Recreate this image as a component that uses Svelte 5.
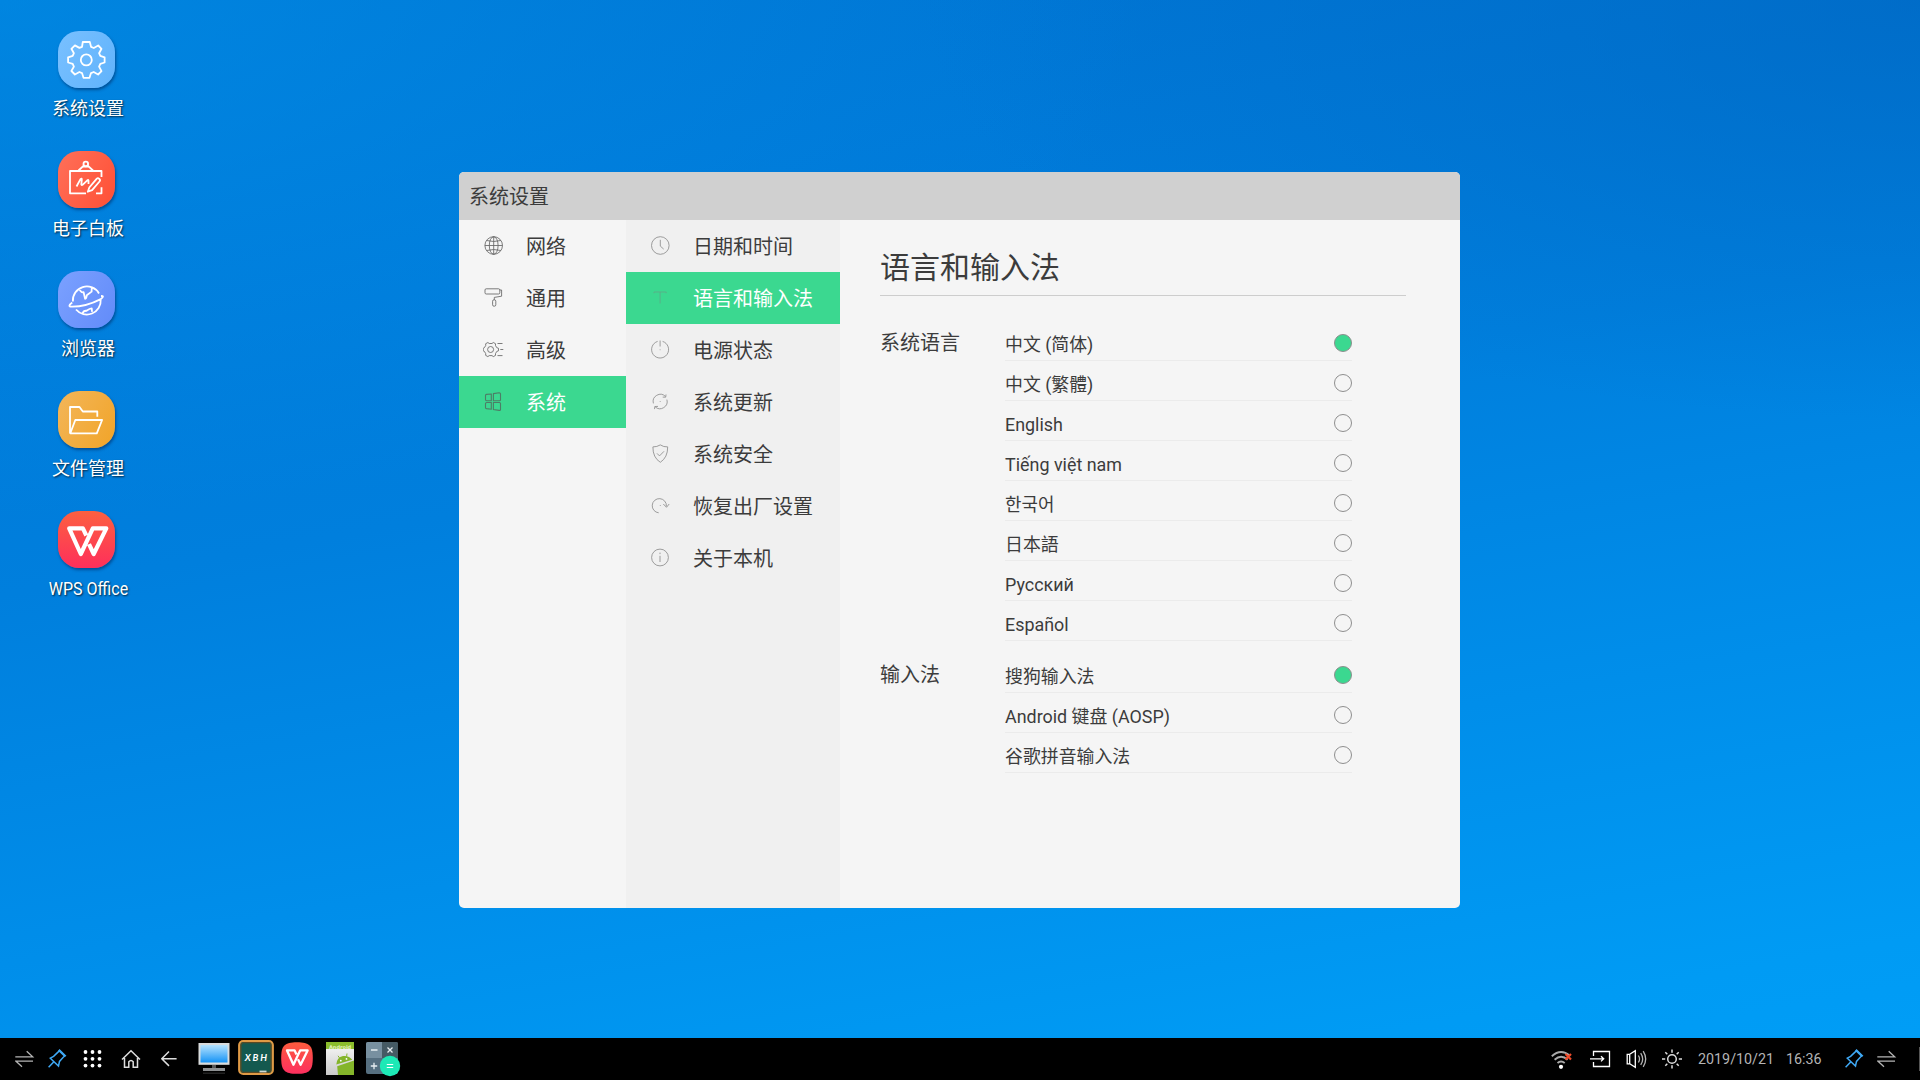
<script>
  const shortcuts = [
    { id: 'settings', label: '系统设置' },
    { id: 'board', label: '电子白板' },
    { id: 'browser', label: '浏览器' },
    { id: 'files', label: '文件管理' },
    { id: 'wps', label: 'WPS Office' },
  ];
  const sections = [
    { id: 'globe', label: '网络' },
    { id: 'roller', label: '通用' },
    { id: 'gear', label: '高级' },
    { id: 'windows', label: '系统', active: true },
  ];
  const pages = [
    { id: 'clock', label: '日期和时间' },
    { id: 'type', label: '语言和输入法', active: true },
    { id: 'power', label: '电源状态' },
    { id: 'update', label: '系统更新' },
    { id: 'shield', label: '系统安全' },
    { id: 'restore', label: '恢复出厂设置' },
    { id: 'info', label: '关于本机' },
  ];
  const groups = [
    {
      label: '系统语言',
      options: ['中文 (简体)', '中文 (繁體)', 'English', 'Tiếng việt nam', '한국어', '日本語', 'Русский', 'Español'],
    },
    { label: '输入法', options: ['搜狗输入法', 'Android 键盘 (AOSP)', '谷歌拼音输入法'] },
  ];
  let chosen = $state([0, 0]);
</script>

{#snippet navIcon(id)}
  <svg class="nav-icon" viewBox="0 0 22 22" width="22" height="22">
    {#if id === 'globe'}
      <circle cx="10.7" cy="10.5" r="8.8" />
      <ellipse cx="10.7" cy="10.5" rx="4.4" ry="8.8" />
      <path d="M10.7 1.7v17.6M1.9 10.5h17.6M3.6 5.5q7.1 2 14.2 0M3.6 15.5q7.1-2 14.2 0" />
    {:else if id === 'roller'}
      <rect x="2" y="1.8" width="14.8" height="5.2" rx="1.2" />
      <path d="M16.8 3h1.8v6.2l-7.3 1.2v2.4" />
      <rect x="9.6" y="12.8" width="3.2" height="6.4" rx="1.4" />
    {:else if id === 'gear'}
      <path d="M4.900 3.500l1.300 1h2.800l1.300-1 2.200 1.200v1.800l1.300 2.200 1.700.6v2.500l-1.700.6-1.300 2.200v1.800l-2.200 1.200-1.300-1H6.200l-1.300 1-2.200-1.200v-1.800L1.400 12.400l-1.200-.6V9.300l1.200-.6 1.300-2.200V4.700z" />
      <circle cx="7.600" cy="10.500" r="3" />
      <path d="M14.500 4.500h5M17.300 10.500h3M14.500 16.600h5" />
    {:else if id === 'windows'}
      <path d="M2.500 4.600q0-1 1-1.200L8.300 3v6.700H3.700q-1.200 0-1.200-1.100zM10.400 2.600l5.800-.9q1.300 0 1.300 1v6q0 1-1 1h-6.100zM2.500 12.500q0-1 1.200-1h4.600v6.700l-4.800-.6q-1-.2-1-1.200zM10.400 11.500h6.100q1 0 1 1v6q0 1-1.300.9l-5.800-.9z" />
    {:else if id === 'clock'}
      <circle cx="11.3" cy="10.5" r="8.8" />
      <path d="M11.3 4.8v6.3l3.400 3" />
    {:else if id === 'type'}
      <path d="M5 6.200V5h12.200v1.200M11.100 5v11.500" />
    {:else if id === 'power'}
      <path d="M8.600 2.400a8.500 8.500 0 1 0 5 0M11.100 1.500v6M11.100 10.400v.8" />
    {:else if id === 'update'}
      <path d="M4.400 12.400A7.200 7.200 0 0 1 16.400 5.400M17.900 8.600A7.200 7.200 0 0 1 6.200 15.900M13.700 6.100l3 .1.300-2.700M9 15.400l-3.200.1-.3 2.600M11.200 10.200v.8" />
    {:else if id === 'shield'}
      <path d="M11.300 1.900q3.300 2.200 7.400 2 0 10.700-7.400 15.400Q3.800 14.600 3.900 3.900 8 4 11.300 1.900zM8 10.400l2.500 2.500 4.500-4.600" />
    {:else if id === 'restore'}
      <path d="M9.700 17.800A7.100 7.100 0 1 1 17.400 11.300M14.300 9l3.200 3.300L20.200 9M11.300 10.200v.8" />
    {:else}
      <circle cx="11" cy="10.5" r="8.4" />
      <path d="M11 5.600v1.500M11 8.800v6.200" />
    {/if}
  </svg>
{/snippet}

{#snippet pin()}
  <svg class="tray-pin" viewBox="0 0 20 42" width="20" height="42">
    <path class="blue" d="M1.600 29.300l5.300-5.600M3.300 20.200l8.200 7.800 1-4.600 5-5.500-5.200-5-5.700 5.500z" />
    <path class="blue" d="M11.600 13.300l1-1.200 5.700 5.500-1.200 1" />
  </svg>
{/snippet}

{#snippet swap()}
  <svg class="tray-swap" viewBox="0 0 20 42" width="20" height="42">
    <path class="dim" d="M.3 18.900h17.400l-6-5.700M18 23.100H.8l6.200 5.600" />
  </svg>
{/snippet}

{#snippet wpsMark()}
  <path class="wps-mark" d="M28.300 24.500l-3.400-7.200H11.200L22.800 43l12-25.700h13.500L35.700 43l-4.700-9.800" />
{/snippet}

<main class="screen">
  <div class="workspace">
    <nav class="desktop">
      {#each shortcuts as item (item.id)}
        <button class="shortcut">
          <span class="tile {item.id}">
            <svg viewBox="0 0 57 57" width="57" height="57">
              {#if item.id === 'settings'}
                <path d="M24.800 11h7l1.300 4.900 2.700 1.100 4.400-2.500 3.300 3.300-2.400 4.400 1.200 2.700 4.300 1.400v5.200l-4.300 1.400-1.200 2.700 2.400 4.500-3.400 3.400-4.400-2.500-2.700 1.100-1.500 4.700h-6l-1.500-4.700-2.600-1.100-4.500 2.500-3.500-3.500 2.500-4.400-1.200-2.700-4.600-1.400v-5.200l4.600-1.400 1.200-2.700-2.500-4.400 3.500-3.400 4.500 2.500 2.600-1.100z" />
                <circle cx="28.3" cy="28.9" r="5.5" />
              {:else if item.id === 'board'}
                <path d="M43.500 26v-6H12v22.300h16M38 42.300h5.500v-6M20.500 19.500l5-4.700M35 19.500l-5-4.700M18.500 35.500l4-7.400q1.500-1.300 1.300.7l-.5 4.500q.3 1.500 1.500.3l4.500-4.300q1.400-.8 1.200.7v3" />
                <circle cx="27.8" cy="13" r="2.3" />
                <path d="M25 15.500h5.700M31.300 36.500l7.300-8.700q1.300-1.300 2.600 0 1.500 1.300.3 2.700l-7.400 8.700-4.300 1.500z" />
              {:else if item.id === 'browser'}
                <path d="M14.900 30.500A14 14 0 0 1 41 22.500M42.700 28.500A14 14 0 0 1 18 38.500M14.200 31.500Q9 35.500 13.500 35.700q14 .2 29.300-7.600 4.200-3.200.2-3.100M21.300 17.500q1.500 4.500 4.300 3.700l1.500 6.600q1.400-.2 1.700-3.600l4.800-3.600.2-4.500M24.500 42.500q1-3 4-2.700 3.300-2.500 5.200-2.500l.4 3.500" />
              {:else if item.id === 'files'}
                <path d="M12 42.300V16h9.500l3.300 4.500h14.500v5.300M12.300 42.300l5-13.300h26.800l-5.300 13.300z" />
              {:else}
                {@render wpsMark()}
              {/if}
            </svg>
          </span>
          <span class="caption" class:narrow={item.id === 'wps'}>{item.label}</span>
        </button>
      {/each}
    </nav>

    <section class="window">
      <header class="titlebar">系统设置</header>
      <div class="body">
        <nav class="sections">
          {#each sections as item (item.id)}
            <button class="nav-row" class:active={item.active}>{@render navIcon(item.id)}<span>{item.label}</span></button>
          {/each}
        </nav>
        <nav class="pages">
          {#each pages as item (item.id)}
            <button class="nav-row" class:active={item.active}>{@render navIcon(item.id)}<span>{item.label}</span></button>
          {/each}
        </nav>
        <article class="content">
          <h1>语言和输入法</h1>
          {#each groups as group, g}
            <div class="group">
              <h2>{group.label}</h2>
              <div class="options">
                {#each group.options as option, i}
                  <button class="option" onclick={() => (chosen[g] = i)}>
                    <span class="name">{option}</span>
                    <span class="radio" class:on={chosen[g] === i}></span>
                  </button>
                {/each}
              </div>
            </div>
          {/each}
        </article>
      </div>
    </section>
  </div>

  <footer class="taskbar">
    <div class="launch">
      {@render swap()}
      {@render pin()}
      <svg class="apps" viewBox="0 0 20 42" width="20" height="42">
        {#each [0, 1, 2] as r}
          {#each [0, 1, 2] as c}
            <circle class="dot" cx={2.5 + c * 7} cy={14 + r * 6.8} r="1.9" />
          {/each}
        {/each}
      </svg>
      <svg class="home" viewBox="0 0 20 42" width="20" height="42">
        <path class="light" d="M1 21.500L10 12.800l9 8.700M3.500 20v9.300h4.300v-5.500q2.200-2.500 4.400 0v5.500h4.300V20" />
      </svg>
      <svg class="back" viewBox="0 0 18 42" width="18" height="42">
        <path class="light" d="M15.600 20.700H.8M8 13.500L.8 20.700 8 27.900" />
      </svg>
      <svg class="monitor" viewBox="0 0 32 42" width="32" height="42">
        <defs>
          <linearGradient id="glass" x1="0" y1="0" x2="0" y2="1"><stop offset="0" stop-color="#b5e3ff" /><stop offset="1" stop-color="#1593f5" /></linearGradient>
        </defs>
        <rect x=".5" y="5" width="31" height="21.8" fill="#d9dcdd" />
        <rect x="2.5" y="7" width="27" height="17.5" fill="url(#glass)" />
        <path d="M14 27h4v3h-4z" fill="#555" />
        <path d="M5 30h22v3H5z" fill="#8d9092" />
        <path d="M5 34.500h22v1.500H5z" fill="#222" />
      </svg>
      <svg class="chalk" viewBox="0 0 36 42" width="36" height="42">
        <rect x="1.2" y="3" width="33.6" height="33" rx="4" fill="#14594f" stroke="#e09a45" stroke-width="2.2" />
        <rect x="2.9" y="4.7" width="30.2" height="29.6" rx="2.5" fill="none" stroke="#6b451a" stroke-width="1" />
        <path d="M21.500 33.500h7" stroke="#cfd8d2" stroke-width="1.8" />
        <text x="18.8" y="22.800" text-anchor="middle">XBH</text>
      </svg>
      <svg class="wps-small" viewBox="0 0 32 42" width="32" height="42">
        <defs>
          <linearGradient id="wpsfill" x1="0" y1="0" x2="0" y2="1"><stop offset="0" stop-color="#fc5b3d" /><stop offset="1" stop-color="#fd2f5f" /></linearGradient>
        </defs>
        <path d="M16 4.200c12.500 0 15.800 3.300 15.800 15.800S28.500 35.800 16 35.800.2 32.500.2 20 3.500 4.200 16 4.200z" fill="url(#wpsfill)" />
        <g transform="translate(-.2 2.8) scale(.555)">{@render wpsMark()}</g>
      </svg>
      <svg class="droid" viewBox="0 0 28 42" width="28" height="42">
        <defs>
          <linearGradient id="paper" x1="0" y1="0" x2="0" y2="1"><stop offset="0" stop-color="#fafafa" /><stop offset="1" stop-color="#c9c9c9" /></linearGradient>
        </defs>
        <path d="M0 4h28v33H0z" fill="url(#paper)" />
        <path d="M0 4h28v7H0z" fill="#8bbd2d" />
        <text x="3" y="10.6">Android</text>
        <path d="M10.300 26.500Q10.800 19.300 17 18q6-.8 9.300 3.800zM11.200 28.300L28 22.500V37H12z" fill="#84b52a" />
        <path d="M12 17.800l2 2.800M21 15.500l-.4 3" stroke="#84b52a" />
        <circle cx="14.8" cy="22.7" r=".9" fill="#fff" />
        <circle cx="20.5" cy="20.9" r=".9" fill="#fff" />
      </svg>
      <svg class="calc" viewBox="0 0 36 42" width="36" height="42">
        <rect x="0" y="4" width="32" height="32" rx="2" fill="#566f80" />
        <path d="M0 20V6q0-2 2-2h14v16z" fill="#7890a0" />
        <path d="M16 4h14q2 0 2 2v14H16z" fill="#455a64" />
        <path d="M5 12h6.500M21.500 9.500l5 5M26.500 9.500l-5 5M4.800 28h6.400M8 24.800v6.400" stroke="#e8eef1" stroke-width="1.3" />
        <circle cx="24" cy="28" r="10.2" fill="#1de9b6" />
        <path d="M20.800 26.500h6.400M20.800 29.500h6.400" stroke="#fff" stroke-width="1.2" />
      </svg>
    </div>

    <div class="tray">
      <svg class="wifi" viewBox="0 0 22 42" width="22" height="42">
        <path class="wave" d="M.8 18.200q9-8 18-.5M3.600 21.800q6.500-6 13 0M6.500 25q3.500-3 7.200 0" />
        <circle class="dot" cx="10" cy="28.8" r="2.1" />
        <path class="cross" d="M14.500 16l5.500 5.500M20 16l-5.500 5.500" />
      </svg>
      <svg class="source" viewBox="0 0 22 42" width="22" height="42">
        <path class="white" d="M3.500 18v-4.500h16v15h-16V24M0 20.800h13.700M11 18.200l2.700 2.600-2.700 2.600" />
      </svg>
      <svg class="volume" viewBox="0 0 22 42" width="22" height="42">
        <path class="white" d="M1.200 16.300h2.500v9.500H1.200zM3.700 16.300l5.600-3.600v16.600l-5.600-3.500" />
        <path class="dim" d="M12.400 17.500q2.300 3.500 0 7M14.700 15.200q4 6 0 11.700M17.200 13.200q5 7.900 0 15.700" />
      </svg>
      <svg class="sun" viewBox="0 0 20 42" width="20" height="42">
        <circle class="light" cx="10" cy="21" r="4.3" />
        <path class="light" d="M10 11.500v3.200M10 27.300v3.200M0 21h3.200M16.800 21H20M3.300 14.300l2 2M14.700 25.700l2 2M16.700 14.300l-2 2M5.300 25.700l-2 2" />
      </svg>
      <span class="date">2019/10/21</span>
      <span class="time">16:36</span>
      {@render pin()}
      {@render swap()}
      <span class="edge"></span>
    </div>
  </footer>
</main>

<style>
  :global(body) { margin: 0; }
  .screen {
    display: flex;
    flex-direction: column;
    width: 1920px;
    height: 1080px;
    overflow: hidden;
    font-family: Roboto, 'Noto Sans CJK SC', sans-serif;
    color: #3c3c3c;
    background:
      radial-gradient(ellipse 1150px 520px at 0 0, rgba(0, 152, 240, 0.5), rgba(0, 152, 240, 0) 100%),
      radial-gradient(ellipse 1000px 420px at 100% 0, rgba(0, 100, 190, 0.6), rgba(0, 100, 190, 0) 100%),
      linear-gradient(170deg, #0072d0 0%, #0079d8 22%, #007fdd 42%, #008eea 68%, #009bf4 90%, #009ef7 100%);
  }
  button {
    border: 0;
    padding: 0;
    background: none;
    font: inherit;
    color: inherit;
    text-align: left;
  }
  svg { display: block; fill: none; flex: none; }

  .workspace { display: flex; height: 1038px; }
  .desktop { width: 459px; padding: 31px 0 0 28px; box-sizing: border-box; }
  .shortcut {
    display: flex;
    flex-direction: column;
    align-items: center;
    width: 120px;
    height: 120px;
    color: #fff;
    font-size: 18px;
  }
  .tile {
    width: 57px;
    height: 57px;
    margin-right: 3px;
    border-radius: 21px;
    box-shadow: 1px 2px 3px rgba(0, 30, 80, 0.5);
  }
  .tile svg { stroke: #fff; stroke-width: 1.8; stroke-linejoin: round; }
  .settings { background: linear-gradient(120deg, #79c0ff, #60b3fc); }
  .board { background: linear-gradient(120deg, #ff7059, #ff4f35); }
  .browser { background: linear-gradient(120deg, #7ba1ff, #628bf9); }
  .files { background: linear-gradient(120deg, #f3b65a, #f1a428); }
  .wps { background: linear-gradient(#fc6040, #fe2f5b); }
  .wps-mark { fill: none; stroke: #fff; stroke-width: 4.2; stroke-linejoin: round; }
  .caption {
    margin-top: 8px;
    line-height: 26px;
    white-space: nowrap;
    text-shadow: 1px 1px 2px rgba(0, 0, 0, 0.75);
  }
  .narrow { padding-left: 2px; transform: scaleX(0.89); }

  .window {
    display: flex;
    flex-direction: column;
    width: 1001px;
    height: 736px;
    margin-top: 172px;
    border-radius: 5px;
    overflow: hidden;
    background: #f5f5f5;
    font-size: 20px;
  }
  .titlebar { height: 48px; padding-left: 10px; line-height: 50px; background: #d0d0d0; }
  .body { display: flex; flex: 1; }
  .sections { width: 167px; }
  .pages { width: 214px; background: #f0f0f0; }
  .nav-row { display: flex; align-items: center; gap: 21px; width: 100%; height: 52px; padding-left: 24px; }
  .nav-row span { padding-bottom: 2px; }
  .pages .nav-row { gap: 22px; padding-left: 23px; }
  .nav-icon { stroke: #666; stroke-width: 0.85; }
  .pages .nav-icon { stroke: #8c8c8c; }
  .active { background: #3bd890; color: #fff; }
  .sections .active .nav-icon { stroke: #4d7d66; stroke-width: 1.1; }
  .pages .active .nav-icon { stroke: #5cab86; }

  .content { flex: 1; padding: 20px 54px 0 40px; }
  h1, h2 { margin: 0; font-weight: 400; }
  h1 {
    height: 55px;
    margin-bottom: 25px;
    border-bottom: 1px solid #cdcdcd;
    font-size: 30px;
    line-height: 55px;
  }
  .group { display: flex; margin-bottom: 12px; }
  h2 { width: 125px; font-size: 20px; line-height: 44px; }
  .options { width: 347px; }
  .option {
    display: flex;
    align-items: center;
    justify-content: space-between;
    width: 100%;
    height: 40px;
    box-sizing: border-box;
    border-bottom: 1px solid #ebebeb;
    font-size: 17.9px;
  }
  .name { padding-top: 8px; line-height: 28px; }
  .radio { width: 16px; height: 16px; margin-top: 5px; border: 1px solid #8e8e8e; border-radius: 50%; }
  .on { background: #3bd890; }

  .taskbar { display: flex; justify-content: space-between; height: 42px; background: #000; }
  .launch, .tray { display: flex; align-items: center; }
  .light { stroke: #ddd; stroke-width: 1.5; }
  .white { stroke: #fff; stroke-width: 1.3; }
  .dim { stroke: #b5b5b5; stroke-width: 1.3; }
  .blue { stroke: #3fa9f5; stroke-width: 1.5; }
  .wave { stroke: #aaa; stroke-width: 1.9; }
  .cross { stroke: #ee4b2b; stroke-width: 2.2; }
  .dot { fill: #fff; }
  .launch .tray-swap { margin-left: 15px; }
  .launch .tray-pin { margin-left: 12px; }
  .apps { margin-left: 16px; }
  .home { margin-left: 18px; }
  .back { margin-left: 20px; }
  .monitor { margin-left: 19px; }
  .chalk { margin-left: 8px; }
  .chalk text { fill: #fff; font: italic 700 9.5px Lato, sans-serif; letter-spacing: 1.8px; }
  .wps-small { margin-left: 7px; }
  .droid { margin-left: 13px; }
  .droid text { fill: #e6f5c0; font: 700 5px 'DejaVu Sans', sans-serif; }
  .calc { margin-left: 12px; }
  .source { margin-left: 17px; }
  .volume { margin-left: 14px; }
  .sun { margin-left: 14px; }
  .date, .time { color: #b4b4b4; font-size: 14.3px; line-height: 42px; white-space: nowrap; }
  .date { width: 75px; margin-left: 16px; }
  .time { width: 36px; margin-left: 13px; }
  .tray .tray-pin { margin-left: 22px; }
  .tray .tray-swap { margin-left: 13px; }
  .edge { width: 1px; height: 24px; margin-left: 22px; background: #555; }
</style>
